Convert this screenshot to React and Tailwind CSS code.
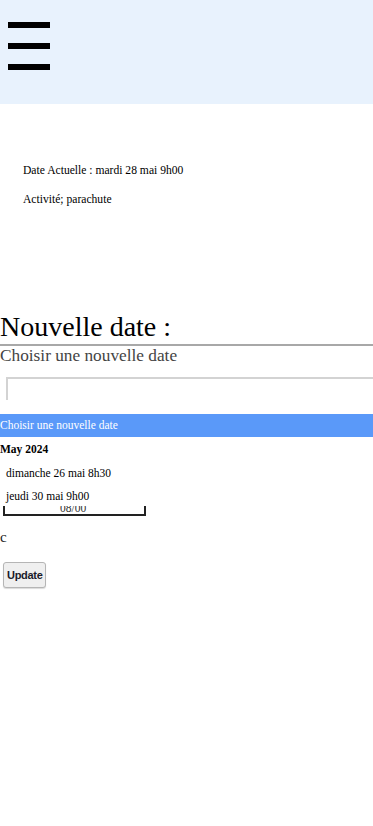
export default function App() {
    return (
        <div className="min-h-[826px] bg-white text-black" style={{ fontFamily: '"Liberation Serif", "Times New Roman", serif' }}>
            {/* Header */}
            <header className="h-[104px] bg-[#e8f2fd] pl-2 pt-[22px]">
                <div className="flex flex-col gap-[15px] w-[42px]">
                    <div className="h-[6px] bg-black" />
                    <div className="h-[6px] bg-black" />
                    <div className="h-[6px] bg-black" />
                </div>
            </header>

            {/* Current booking */}
            <div className="pl-[23px] pt-[60px] text-[11.6px] leading-[14px]">
                <p>Date Actuelle : mardi 28 mai 9h00</p>
                <p className="mt-[15px]">Activité; parachute</p>
            </div>

            {/* New date form */}
            <h2 className="mt-[104px] text-[28px] leading-[32px] border-b-2 border-[#a8a8a8] pb-px">Nouvelle date :</h2>
            <label className="block text-[17.3px] leading-[20px] text-[#444]">Choisir une nouvelle date</label>
            <div className="mt-[11px] ml-[6px] h-[23px] w-[380px] border-t-2 border-l-2 border-[#d3d3d3]" />

            {/* Dropdown list */}
            <div className="mt-[14px] h-[23px] bg-[#5a99f9] text-white text-[11.5px] leading-[23px]">Choisir une nouvelle date</div>
            <p className="mt-[5px] font-bold text-[11.5px] leading-[14px]">May 2024</p>
            <p className="mt-[10px] pl-[6px] text-[11.5px] leading-[14px]">dimanche 26 mai 8h30</p>
            <p className="mt-[9px] pl-[6px] text-[11.5px] leading-[14px]">jeudi 30 mai 9h00</p>

            {/* date input peeking under list */}
            <div className="ml-[3px] mt-[3px] w-[143px] h-[10px] border-l-2 border-r-2 border-b-2 border-[#222] overflow-hidden">
                <div className="pl-[55px] -mt-[5px] text-[11.5px] leading-[14px] text-[#333]">08/00</div>
            </div>

            <p className="mt-[14px] text-[15px] leading-[14px] text-[#222]">c</p>

            <button className="mt-[18px] ml-[3px] h-[26px] px-[3px] rounded-[3px] border border-[#b5b5b5] bg-[#efefef] text-[11px] font-bold tracking-[-0.3px] text-[#1a1a2a] shadow-[0_1px_1px_rgba(0,0,0,0.15)]" style={{ fontFamily: '"Liberation Sans", Arial, sans-serif' }}>
                Update
            </button>
        </div>
    );
}
